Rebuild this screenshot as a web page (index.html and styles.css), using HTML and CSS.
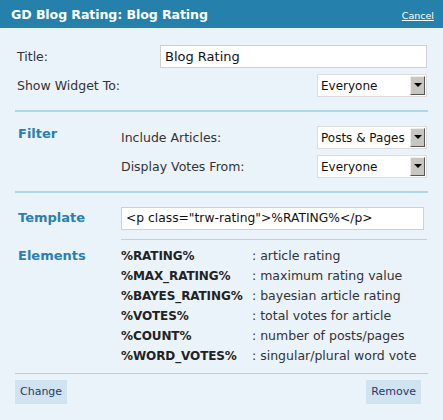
FILE: index.html
```html
<!DOCTYPE html>
<html>
<head>
<meta charset="utf-8">
<link rel="stylesheet" href="styles.css">
</head>
<body>
<div class="panel">
  <div class="header">
    <span class="title">GD Blog Rating: Blog Rating</span>
    <a class="cancel">Cancel</a>
  </div>
  <div class="body">
    <div class="section top">
      <div class="row">
        <span class="label">Title:</span>
        <div class="input title-input">Blog Rating</div>
      </div>
      <div class="row">
        <span class="label">Show Widget To:</span>
        <div class="select"><span class="val">Everyone</span><span class="arrow"></span></div>
      </div>
    </div>
    <div class="sep"></div>
    <div class="section filter">
      <div class="head">Filter</div>
      <div class="fields">
        <div class="row">
          <span class="label">Include Articles:</span>
          <div class="select"><span class="val">Posts &amp; Pages</span><span class="arrow"></span></div>
        </div>
        <div class="row">
          <span class="label">Display Votes From:</span>
          <div class="select"><span class="val">Everyone</span><span class="arrow"></span></div>
        </div>
      </div>
    </div>
    <div class="sep"></div>
    <div class="section template">
      <div class="head">Template</div>
      <div class="fields">
        <div class="input tpl-input">&lt;p class="trw-rating"&gt;%RATING%&lt;/p&gt;</div>
        <div class="thin"></div>
      </div>
    </div>
    <div class="section elements">
      <div class="head">Elements</div>
      <div class="elist">
        <span class="code">%RATING%</span><span class="desc">: article rating</span>
        <span class="code">%MAX_RATING%</span><span class="desc">: maximum rating value</span>
        <span class="code">%BAYES_RATING%</span><span class="desc">: bayesian article rating</span>
        <span class="code">%VOTES%</span><span class="desc">: total votes for article</span>
        <span class="code">%COUNT%</span><span class="desc">: number of posts/pages</span>
        <span class="code">%WORD_VOTES%</span><span class="desc">: singular/plural word vote</span>
      </div>
    </div>
    <div class="gsep"></div>
    <div class="buttons">
      <span class="btn">Change</span>
      <span class="btn">Remove</span>
    </div>
  </div>
</div>
</body>
</html>
```
FILE: styles.css
```css
html, body {
  margin: 0;
  padding: 0;
  background: #eaf2fa;
}
body {
  font-family: "DejaVu Sans", Verdana, sans-serif;
  font-size: 12.5px;
  color: #333;
  width: 443px;
  height: 420px;
  overflow: hidden;
}
.header {
  height: 28px;
  background: #2580ab;
  display: flex;
  align-items: center;
  justify-content: space-between;
  padding: 0 9px 0 11px;
}
.title {
  color: #fff;
  font-weight: bold;
  font-size: 12.6px;
  letter-spacing: -0.1px;
}
.cancel {
  color: #fff;
  text-decoration: underline;
  font-size: 9.5px;
  padding-top: 2px;
}
.body {
  padding: 17px 15px 0 15px;
}
.row {
  display: flex;
  align-items: center;
  justify-content: space-between;
}
.label {
  color: #333;
}
.section.top {
  padding: 0 1px 0 2px;
}
.section.top .row {
  height: 23px;
}
.section.top .row + .row {
  margin-top: 6px;
}
.input {
  box-sizing: border-box;
  background: #fff;
  border: 1px solid #d0d0d0;
  height: 23px;
  line-height: 21px;
  padding: 0 4px;
  color: #111;
}
.title-input {
  width: 267px;
  font-size: 13px;
}
.select {
  box-sizing: border-box;
  width: 110px;
  height: 23px;
  background: #fff;
  border: 1px solid #dcdcdc;
  display: flex;
  align-items: center;
  justify-content: space-between;
  padding: 0 1px 0 3px;
  font-size: 12px;
  color: #111;
}
.arrow {
  width: 15px;
  height: 19px;
  box-sizing: border-box;
  background: #c9c5c1;
  border-right: 1px solid #555;
  border-bottom: 1px solid #555;
  border-top: 1px solid #eee;
  border-left: 1px solid #eee;
  position: relative;
}
.arrow::after {
  content: "";
  position: absolute;
  left: 3px;
  top: 6px;
  border-left: 4px solid transparent;
  border-right: 4px solid transparent;
  border-top: 4px solid #000;
}
.sep {
  height: 2px;
  background: #add8e6;
  margin: 13px 0 12px;
}
.head {
  width: 103px;
  flex: none;
  color: #2a7fb0;
  font-weight: bold;
  font-size: 13px;
  padding-left: 3px;
}
.section.filter {
  display: flex;
  align-items: flex-start;
  padding-top: 2px;
}
.fields {
  flex: 1;
  padding-right: 1px;
}
.filter .row {
  height: 23px;
}
.filter .row + .row {
  margin-top: 6px;
}
.section.template {
  display: flex;
  align-items: flex-start;
  padding-top: 2px;
}
.template .head {
  padding-top: 3px;
}
.tpl-input {
  width: 303px;
  font-size: 12.3px;
}
.thin {
  height: 1px;
  background: #add8e6;
  margin-top: 9px;
}
.section.elements {
  display: flex;
  align-items: flex-start;
  margin-top: 6px;
}
.elements .head {
  line-height: 20px;
}
.elist {
  display: grid;
  grid-template-columns: 131px auto;
  line-height: 20px;
}
.code {
  font-weight: bold;
  color: #222;
  font-size: 12px;
  letter-spacing: -0.1px;
}
.desc {
  color: #333;
}
.gsep {
  height: 1px;
  background: #c8c8c8;
  margin-top: 7px;
}
.buttons {
  display: flex;
  justify-content: space-between;
  margin-top: 6px;
  padding-right: 7px;
}
.btn {
  background: #cfe3f0;
  color: #2a3a6a;
  height: 24px;
  line-height: 24px;
  padding: 0 5px;
  font-size: 11px;
}
```
